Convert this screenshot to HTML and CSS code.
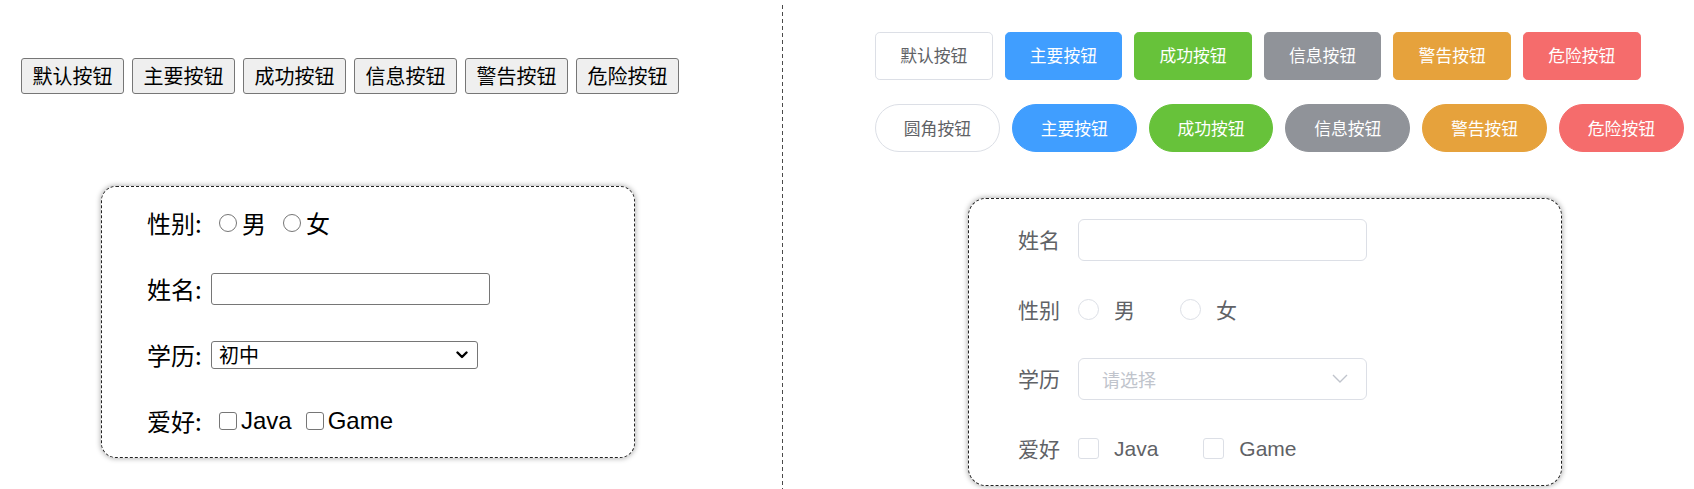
FILE: index.html
```html
<!DOCTYPE html>
<html lang="zh-CN">
<head>
<meta charset="utf-8">
<title>按钮与表单</title>
<link rel="stylesheet" href="styles.css">
</head>
<body>
<div class="page">
  <section class="pane pane-native">
    <div class="native-buttons">
      <button class="nbtn">默认按钮</button>
      <button class="nbtn">主要按钮</button>
      <button class="nbtn">成功按钮</button>
      <button class="nbtn">信息按钮</button>
      <button class="nbtn">警告按钮</button>
      <button class="nbtn">危险按钮</button>
    </div>
    <form class="card card-native">
      <div class="nrow">
        <span class="nlabel">性别:</span>
        <input class="nradio" type="radio" name="g1"><span class="ntext">男</span>
        <input class="nradio nradio-2" type="radio" name="g1"><span class="ntext">女</span>
      </div>
      <div class="nrow">
        <span class="nlabel">姓名:</span>
        <input class="ninput" type="text">
      </div>
      <div class="nrow">
        <span class="nlabel">学历:</span>
        <div class="nselect">
          <span>初中</span>
          <svg class="nchev" width="12" height="8" viewBox="0 0 12 8"><path d="M1.5 1.5 L6 6 L10.5 1.5" fill="none" stroke="#000" stroke-width="2.4" stroke-linecap="round" stroke-linejoin="round"/></svg>
        </div>
      </div>
      <div class="nrow">
        <span class="nlabel">爱好:</span>
        <input class="ncheck" type="checkbox"><span class="ntext latin">Java</span>
        <input class="ncheck ncheck-2" type="checkbox"><span class="ntext latin">Game</span>
      </div>
    </form>
  </section>

  <div class="divider"></div>

  <section class="pane pane-element">
    <div class="ebtn-row">
      <button class="ebtn">默认按钮</button>
      <button class="ebtn ebtn-primary">主要按钮</button>
      <button class="ebtn ebtn-success">成功按钮</button>
      <button class="ebtn ebtn-info">信息按钮</button>
      <button class="ebtn ebtn-warning">警告按钮</button>
      <button class="ebtn ebtn-danger">危险按钮</button>
    </div>
    <div class="ebtn-row">
      <button class="ebtn round">圆角按钮</button>
      <button class="ebtn round ebtn-primary">主要按钮</button>
      <button class="ebtn round ebtn-success">成功按钮</button>
      <button class="ebtn round ebtn-info">信息按钮</button>
      <button class="ebtn round ebtn-warning">警告按钮</button>
      <button class="ebtn round ebtn-danger">危险按钮</button>
    </div>
    <form class="card card-element">
      <div class="erow">
        <span class="elabel">姓名</span>
        <div class="einput"></div>
      </div>
      <div class="erow">
        <span class="elabel">性别</span>
        <span class="eopt"><span class="eradio"></span><span class="etext">男</span></span>
        <span class="eopt"><span class="eradio"></span><span class="etext">女</span></span>
      </div>
      <div class="erow">
        <span class="elabel">学历</span>
        <div class="einput eselect">
          <span class="eplaceholder">请选择</span>
          <svg class="echev" width="16" height="9" viewBox="0 0 16 9"><path d="M1 1 L8 8 L15 1" fill="none" stroke="#C0C4CC" stroke-width="1.4"/></svg>
        </div>
      </div>
      <div class="erow">
        <span class="elabel">爱好</span>
        <span class="eopt"><span class="echeck"></span><span class="etext latin">Java</span></span>
        <span class="eopt"><span class="echeck"></span><span class="etext latin">Game</span></span>
      </div>
    </form>
  </section>
</div>
</body>
</html>
```

FILE: styles.css
```css
html, body {
  margin: 0;
  padding: 0;
  overflow: hidden;
  background: #fff;
}

body {
  font-family: "Noto Sans CJK SC", "Noto Sans", sans-serif;
  color: #000;
}

.page {
  display: flex;
  align-items: flex-start;
  padding-top: 5px;
}

.pane {
  height: 484px;
  box-sizing: border-box;
}

.divider {
  flex: none;
  width: 1px;
  height: 484px;
  background: repeating-linear-gradient(to bottom, #4a4a4a 0 4px, transparent 4px 7px);
}

/* ---------- left: native controls ---------- */
.pane-native {
  width: 782px;
  padding: 53px 0 0 21px;
}

.native-buttons {
  display: flex;
  gap: 8px;
}

.nbtn {
  display: inline-flex;
  align-items: center;
  justify-content: center;
  width: 103px;
  height: 36px;
  padding: 0;
  margin: 0;
  font-family: "Noto Sans CJK SC", sans-serif;
  font-size: 20px;
  line-height: 1;
  color: #000;
  background: #efefef;
  border: 1px solid #767676;
  border-radius: 3px;
}

.card {
  box-sizing: border-box;
  border: 1px dashed #222;
  background: #fff;
  box-shadow: 0 0 5px 1px rgba(0, 0, 0, 0.28);
  margin: 0;
}

.card-native {
  width: 534px;
  height: 272px;
  margin: 92px 0 0 80px;
  border-radius: 15px;
  padding: 20px 0 0 45px;
  display: flex;
  flex-direction: column;
  gap: 34px;
}

.nrow {
  height: 32px;
  display: flex;
  align-items: center;
  font-size: 24px;
  line-height: 1;
}

.nlabel {
  width: 64px;
  flex: none;
}

.latin {
  font-family: "Liberation Sans", "Noto Sans CJK SC", sans-serif;
}

.nradio {
  appearance: none;
  -webkit-appearance: none;
  box-sizing: border-box;
  width: 18px;
  height: 18px;
  margin: 0 5px 0 8px;
  border: 1.5px solid #767676;
  border-radius: 50%;
  background: #fff;
  flex: none;
}

.nradio-2 {
  margin-left: 17px;
}

.ncheck {
  appearance: none;
  -webkit-appearance: none;
  box-sizing: border-box;
  width: 18px;
  height: 18px;
  margin: 0 4px 0 8px;
  border: 1.5px solid #767676;
  border-radius: 3px;
  background: #fff;
  flex: none;
}

.ncheck-2 {
  margin-left: 14px;
}

.ninput {
  box-sizing: border-box;
  width: 279px;
  height: 32px;
  margin: 0;
  border: 1px solid #767676;
  border-radius: 3px;
  padding: 0;
}

.nselect {
  box-sizing: border-box;
  width: 267px;
  height: 28px;
  border: 1px solid #767676;
  border-radius: 3px;
  display: flex;
  align-items: center;
  justify-content: space-between;
  padding: 0 9px 0 7px;
  font-size: 20px;
}

/* ---------- right: element-like controls ---------- */
.pane-element {
  flex: 1;
  padding: 27px 0 0 92px;
}

.ebtn-row {
  display: flex;
  gap: 12px;
  margin-bottom: 24.4px;
}

.ebtn {
  box-sizing: border-box;
  display: inline-flex;
  align-items: center;
  justify-content: center;
  width: 117.6px;
  height: 47.6px;
  padding: 0;
  margin: 0;
  font-family: "Noto Sans CJK SC", sans-serif;
  font-size: 16.8px;
  line-height: 1;
  color: #606266;
  background: #fff;
  border: 1px solid #dcdfe6;
  border-radius: 4.8px;
}

.ebtn.round {
  width: 124.8px;
  height: 48px;
  border-radius: 24px;
}

.ebtn-primary { background: #409eff; border-color: #409eff; color: #fff; }
.ebtn-success { background: #67c23a; border-color: #67c23a; color: #fff; }
.ebtn-info    { background: #909399; border-color: #909399; color: #fff; }
.ebtn-warning { background: #e6a23c; border-color: #e6a23c; color: #fff; }
.ebtn-danger  { background: #f56c6c; border-color: #f56c6c; color: #fff; }

.card-element {
  width: 594px;
  height: 288px;
  margin: 46px 0 0 93px;
  border-radius: 18px;
  padding: 20px 0 0 49px;
  display: flex;
  flex-direction: column;
  gap: 27.5px;
}

.erow {
  height: 42px;
  display: flex;
  align-items: center;
  font-size: 21px;
  line-height: 1;
  color: #606266;
}

.elabel {
  width: 42px;
  margin-right: 18px;
  flex: none;
}

.einput {
  box-sizing: border-box;
  width: 289px;
  height: 42px;
  border: 1px solid #dcdfe6;
  border-radius: 6px;
  background: #fff;
}

.eselect {
  display: flex;
  align-items: center;
  justify-content: space-between;
  padding: 0 18px 0 23px;
}

.eplaceholder {
  font-size: 18px;
  color: #c0c4cc;
}

.eopt {
  display: inline-flex;
  align-items: center;
  margin-right: 45px;
}

.eradio {
  box-sizing: border-box;
  width: 21px;
  height: 21px;
  border: 1px solid #dcdfe6;
  border-radius: 50%;
  background: #fff;
}

.echeck {
  box-sizing: border-box;
  width: 21px;
  height: 21px;
  border: 1px solid #dcdfe6;
  border-radius: 3px;
  background: #fff;
}

.etext {
  padding-left: 15px;
}
```
